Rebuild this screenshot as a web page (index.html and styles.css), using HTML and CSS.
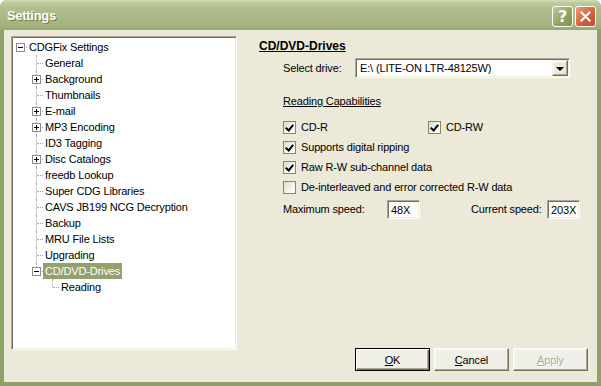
FILE: index.html
```html
<!DOCTYPE html>
<html lang="en">
<head>
    <meta charset="UTF-8">
    <title>Settings</title>
    <link rel="stylesheet" href="styles.css">
</head>
<body>
    <div class="window">
        <div class="titlebar">
            <span class="title">Settings</span>
            <div class="caption-buttons">
                <span class="cbtn help">?</span>
                <span class="cbtn close">
                    <svg width="11" height="11" viewBox="0 0 11 11"><path d="M1.5 1.5 L9.5 9.5 M9.5 1.5 L1.5 9.5" stroke="#fff" stroke-width="2" stroke-linecap="square"/></svg>
                </span>
            </div>
        </div>

        <div class="client">
            <div class="tree">
                <ul class="nodes">
                    <li>
                        <div class="node"><span class="exp"></span><span class="label">CDGFix Settings</span></div>
                        <ul class="nodes">
                            <li><div class="node"><span class="label">General</span></div></li>
                            <li><div class="node"><span class="exp plus"></span><span class="label">Background</span></div></li>
                            <li><div class="node"><span class="label">Thumbnails</span></div></li>
                            <li><div class="node"><span class="exp plus"></span><span class="label">E-mail</span></div></li>
                            <li><div class="node"><span class="exp plus"></span><span class="label">MP3 Encoding</span></div></li>
                            <li><div class="node"><span class="label">ID3 Tagging</span></div></li>
                            <li><div class="node"><span class="exp plus"></span><span class="label">Disc Catalogs</span></div></li>
                            <li><div class="node"><span class="label">freedb Lookup</span></div></li>
                            <li><div class="node"><span class="label">Super CDG Libraries</span></div></li>
                            <li><div class="node"><span class="label">CAVS JB199 NCG Decryption</span></div></li>
                            <li><div class="node"><span class="label">Backup</span></div></li>
                            <li><div class="node"><span class="label">MRU File Lists</span></div></li>
                            <li><div class="node"><span class="label">Upgrading</span></div></li>
                            <li>
                                <div class="node"><span class="exp"></span><span class="label selected">CD/DVD-Drives</span></div>
                                <ul class="nodes">
                                    <li><div class="node"><span class="label">Reading</span></div></li>
                                </ul>
                            </li>
                        </ul>
                    </li>
                </ul>
            </div>

            <div class="page">
                <div class="page-title">CD/DVD-Drives</div>

                <div class="drive-row">
                    <span class="drive-label">Select drive:</span>
                    <div class="combo">
                        <span class="combo-text">E:\ (LITE-ON LTR-48125W)</span>
                        <span class="combo-btn"><span class="arrow"></span></span>
                    </div>
                </div>

                <div class="section-title">Reading Capabilities</div>

                <div class="checks">
                    <div class="check-line">
                        <label class="check-item"><span class="box checked"></span>CD-R</label>
                        <label class="check-item"><span class="box checked"></span>CD-RW</label>
                    </div>
                    <div class="check-line">
                        <label class="check-item wide"><span class="box checked"></span>Supports digital ripping</label>
                    </div>
                    <div class="check-line">
                        <label class="check-item wide"><span class="box checked"></span>Raw R-W sub-channel data</label>
                    </div>
                    <div class="check-line">
                        <label class="check-item wide"><span class="box"></span>De-interleaved and error corrected R-W data</label>
                    </div>
                </div>

                <div class="speed-row">
                    <span class="speed-label">Maximum speed:</span>
                    <span class="speed-input">48X</span>
                    <span class="speed-label current">Current speed:</span>
                    <span class="speed-input">203X</span>
                </div>

                <div class="actions">
                    <button class="btn default"><u>O</u>K</button>
                    <button class="btn"><u>C</u>ancel</button>
                    <button class="btn disabled"><u>A</u>pply</button>
                </div>
            </div>
        </div>
    </div>
</body>
</html>
```

FILE: styles.css
```css
body {
    margin: 0;
    background: #fff;
    font-family: 'Liberation Sans', Arial, sans-serif;
    font-size: 11px;
    letter-spacing: -0.15px;
    color: #000;
}

.window {
    width: 601px;
    height: 386px;
    display: flex;
    flex-direction: column;
    background: #8fa06a;
    border-radius: 7px 7px 0 0;
    overflow: hidden;
}

/* title bar */

.titlebar {
    height: 30px;
    flex-shrink: 0;
    display: flex;
    align-items: center;
    justify-content: space-between;
    padding: 0 5px 0 7px;
    background: linear-gradient(#d3dcb6 0, #bcca9a 3px, #b1be8c 9px, #aab886 18px, #a2b07c 27px, #97a672 30px);
}

.title {
    color: #fff;
    font-weight: bold;
    font-size: 13px;
    letter-spacing: -0.3px;
    text-shadow: 1px 1px #6e7c4c;
    padding-top: 1px;
}

.caption-buttons {
    display: flex;
    gap: 2px;
    margin-top: 2px;
}

.cbtn {
    width: 21px;
    height: 21px;
    box-sizing: border-box;
    border: 1px solid #fff;
    border-radius: 3px;
    display: flex;
    align-items: center;
    justify-content: center;
    color: #fff;
}

.cbtn.help {
    background: linear-gradient(135deg, #b9c99a, #8ea262 60%, #7d9152);
    font-weight: bold;
    font-size: 16px;
    font-family: 'DejaVu Sans', sans-serif;
}

.cbtn.close {
    background: linear-gradient(135deg, #ea9a7a, #d5623c 55%, #c24d2a);
}

/* client area */

.client {
    flex: 1;
    margin: 0 4px 4px;
    background: #ece9d8;
    display: flex;
    padding: 6px 9px 11px 7px;
}

.tree {
    width: 226px;
    height: 314px;
    box-sizing: border-box;
    background: #fff;
    border: 1px solid;
    border-color: #aca899 #fff #fff #aca899;
    box-shadow: inset 1px 1px #716f64, inset -1px -1px #f1efe2;
    padding: 2px 0 0 1px;
    flex-shrink: 0;
}

.nodes {
    list-style: none;
    margin: 0;
    padding: 0;
}

.nodes .nodes {
    margin-left: 16px;
}

.nodes li {
    position: relative;
}

.nodes .nodes > li::after {
    content: '';
    position: absolute;
    left: 7px;
    top: 0;
    bottom: 0;
    border-left: 1px dotted #a8a8a8;
}

.nodes .nodes > li:last-child::after {
    bottom: auto;
    height: 8px;
}

.node {
    position: relative;
    height: 16px;
    padding-left: 14px;
    white-space: nowrap;
}

.node::before {
    content: '';
    position: absolute;
    left: 8px;
    top: 8px;
    width: 6px;
    border-top: 1px dotted #a8a8a8;
}

.label {
    display: inline-block;
    height: 16px;
    line-height: 16px;
    padding: 0 2px;
}

.label.selected {
    background: #93a070;
    color: #fff;
}

.exp {
    position: absolute;
    left: 3px;
    top: 4px;
    width: 9px;
    height: 9px;
    box-sizing: border-box;
    border: 1px solid #8c8c8c;
    background: #fff;
    z-index: 1;
}

.exp::before {
    content: '';
    position: absolute;
    left: 1px;
    top: 3px;
    width: 5px;
    height: 1px;
    background: #000;
}

.exp.plus::after {
    content: '';
    position: absolute;
    left: 3px;
    top: 1px;
    width: 1px;
    height: 5px;
    background: #000;
}

/* property page */

.page {
    flex: 1;
    margin-left: 22px;
    display: flex;
    flex-direction: column;
}

.page-title {
    margin-top: 3px;
    font-weight: bold;
    font-size: 12px;
    line-height: 14px;
    letter-spacing: 0;
    text-decoration: underline;
}

.drive-row {
    display: flex;
    align-items: center;
    margin: 5px 0 0 24px;
    height: 20px;
}

.drive-label {
    width: 72px;
}

.combo {
    width: 215px;
    height: 20px;
    box-sizing: border-box;
    display: flex;
    align-items: center;
    background: #fff;
    border: 1px solid;
    border-color: #aca899 #fff #fff #aca899;
    box-shadow: inset 1px 1px #716f64, inset -1px -1px #f1efe2;
}

.combo-text {
    flex: 1;
    padding-left: 4px;
}

.combo-btn {
    width: 16px;
    height: 16px;
    margin-right: 1px;
    box-sizing: border-box;
    background: #ece9d8;
    border: 1px solid;
    border-color: #f1efe2 #716f64 #716f64 #f1efe2;
    box-shadow: inset -1px -1px #aca899, inset 1px 1px #fff;
    display: flex;
    align-items: center;
    justify-content: center;
}

.arrow {
    width: 0;
    height: 0;
    border-left: 4px solid transparent;
    border-right: 4px solid transparent;
    border-top: 4px solid #000;
    margin-top: 1px;
}

.section-title {
    margin: 17px 0 0 24px;
    line-height: 13px;
    text-decoration: underline;
}

.checks {
    margin: 9px 0 0 24px;
}

.check-line {
    display: flex;
    height: 20px;
    align-items: center;
}

.check-item {
    display: flex;
    align-items: center;
    width: 145px;
}

.check-item.wide {
    width: auto;
}

.box {
    width: 13px;
    height: 13px;
    box-sizing: border-box;
    border: 1px solid #85876e;
    background: linear-gradient(135deg, #dcdbd0, #f4f4ef 60%, #fff);
    margin-right: 5px;
    position: relative;
}

.box.checked::after {
    content: '';
    position: absolute;
    left: 3px;
    top: 1px;
    width: 3px;
    height: 6px;
    border: solid #000;
    border-width: 0 2px 2px 0;
    transform: rotate(40deg);
}

.speed-row {
    display: flex;
    align-items: center;
    height: 20px;
    margin: 2px 0 0 24px;
}

.speed-label {
    width: 104px;
}

.speed-label.current {
    width: 76px;
    margin-left: 51px;
}

.speed-input {
    width: 33px;
    height: 19px;
    box-sizing: border-box;
    background: #fff;
    border: 1px solid;
    border-color: #aca899 #fff #fff #aca899;
    box-shadow: inset 1px 1px #716f64, inset -1px -1px #f1efe2;
    padding: 3px 0 0 3px;
    line-height: 13px;
}

.actions {
    margin-top: auto;
    display: flex;
    justify-content: flex-end;
    gap: 4px;
}

.btn {
    width: 75px;
    height: 23px;
    box-sizing: border-box;
    font-family: inherit;
    font-size: 11px;
    letter-spacing: -0.15px;
    color: #000;
    background: #f0efe8;
    border: 1px solid;
    border-color: #fff #716f64 #716f64 #fff;
    box-shadow: inset -1px -1px #aca899, inset 1px 1px #f5f4ee;
    padding: 0;
}

.btn u {
    text-decoration: underline;
}

.btn.default {
    border: 1px solid #000;
    box-shadow: inset 1px 1px #fff, inset -1px -1px #716f64, inset -2px -2px #aca899;
}

.btn.disabled {
    color: #aca899;
    text-shadow: 1px 1px #fff;
}
```
